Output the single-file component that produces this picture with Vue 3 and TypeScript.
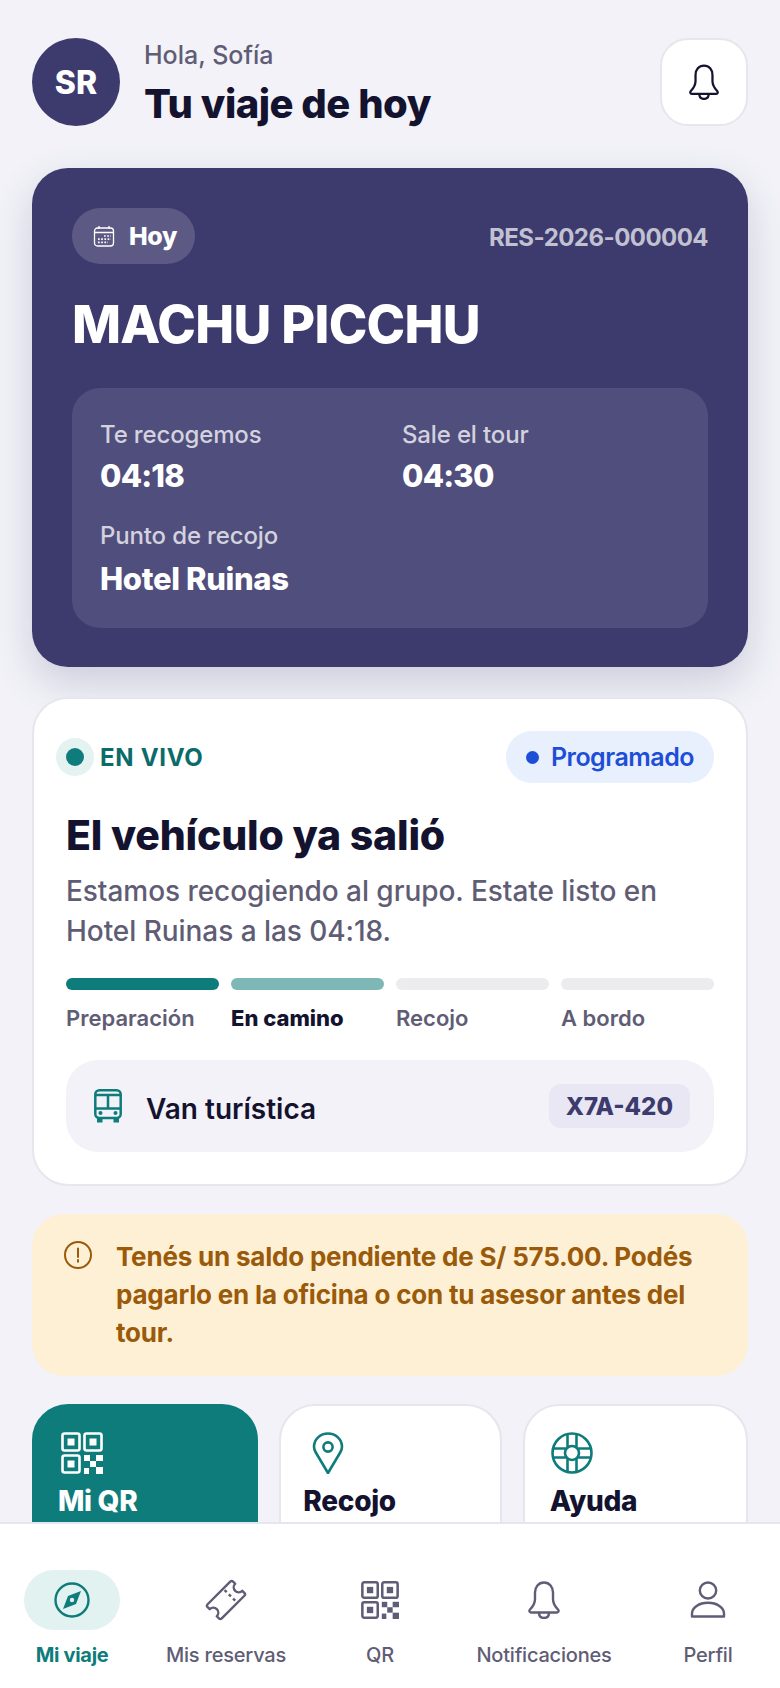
<script setup lang="ts">
interface Step {
  label: string;
  state: "done" | "current" | "next";
}

interface NavItem {
  label: string;
  icon: string;
  active?: boolean;
}

const steps: Step[] = [
  { label: "Preparación", state: "done" },
  { label: "En camino", state: "current" },
  { label: "Recojo", state: "next" },
  { label: "A bordo", state: "next" },
];

const navItems: NavItem[] = [
  { label: "Mi viaje", icon: "compass", active: true },
  { label: "Mis reservas", icon: "ticket" },
  { label: "QR", icon: "qr" },
  { label: "Notificaciones", icon: "bell" },
  { label: "Perfil", icon: "user" },
];
</script>

<template>
  <div class="page">
    <header class="top">
      <div class="avatar">SR</div>
      <div class="greet">
        <p class="hello">Hola, Sofía</p>
        <h1 class="headline">Tu viaje de hoy</h1>
      </div>
      <button class="bell-btn" aria-label="Notificaciones">
        <svg class="bell-large" viewBox="0 0 34 38" fill="none" stroke="#14132f" stroke-width="2.400" stroke-linejoin="round">
          <path d="M17 1.500C11.500 1.500 8 6 8 11.500V18c0 4.500-2 7.500-5 10.500-1.200 1.300-.6 3 1 3h26c1.600 0 2.200-1.700 1-3-3-3-5-6-5-10.500v-6.500C26 6 22.500 1.500 17 1.500z" />
          <path d="M12 31.500c0 3.400 2 5.500 5 5.500s5-2.100 5-5.500" />
        </svg>
      </button>
    </header>

    <section class="hero">
      <div class="hero-top">
        <span class="chip">
          <svg class="icon-24" viewBox="0 0 24 24" fill="none" stroke="#fff" stroke-width="1.300">
            <rect x="2.500" y="4" width="19" height="18" rx="3" />
            <path d="M2.500 8.500h19M7 2v3M17 2v3" />
            <g stroke-width="1.700" stroke-dasharray="1.700 1.500">
              <path d="M12 12h7M6 15.200h13M6 18.400h10" />
            </g>
          </svg>
          Hoy
        </span>
        <span class="code">RES-2026-000004</span>
      </div>
      <h2 class="place">MACHU PICCHU</h2>
      <div class="times">
        <div class="time-grid">
          <div>
            <p class="time-label">Te recogemos</p>
            <p class="time-value">04:18</p>
          </div>
          <div>
            <p class="time-label">Sale el tour</p>
            <p class="time-value">04:30</p>
          </div>
        </div>
        <p class="time-label point-label">Punto de recojo</p>
        <p class="point-value">Hotel Ruinas</p>
      </div>
    </section>

    <section class="live">
      <div class="live-top">
        <span class="live-tag"><i class="live-dot"></i>EN VIVO</span>
        <span class="status"><i class="status-dot"></i>Programado</span>
      </div>
      <h3 class="live-title">El vehículo ya salió</h3>
      <p class="live-desc">Estamos recogiendo al grupo. Estate listo en Hotel Ruinas a las 04:18.</p>
      <div class="steps">
        <div v-for="step in steps" :key="step.label" class="step" :class="step.state">
          <div class="bar"></div>
          <span class="step-label">{{ step.label }}</span>
        </div>
      </div>
      <div class="vehicle">
        <svg class="bus" viewBox="0 0 28 34" fill="none" stroke="#0e7c7b" stroke-width="2.500" stroke-linejoin="round">
          <rect x="1.300" y="1.300" width="25.400" height="27.700" rx="4" />
          <path d="M1.300 6h25.400M14 6v13.500M1.300 19.500h25.400" />
          <circle cx="6.500" cy="24" r="2" fill="#0e7c7b" stroke="none" />
          <circle cx="21.500" cy="24" r="2" fill="#0e7c7b" stroke="none" />
          <path d="M3 28h5.500v5.500H3zM19.500 28H25v5.500h-5.500z" fill="#0e7c7b" stroke="none" />
        </svg>
        <span class="vehicle-name">Van turística</span>
        <span class="plate">X7A-420</span>
      </div>
    </section>

    <section class="alert">
      <svg class="alert-icon" viewBox="0 0 28 28" fill="none" stroke="#9a5a0a" stroke-width="2">
        <circle cx="14" cy="14" r="13" />
        <path d="M14 7.500v8.500M14 19v1.800" stroke-linecap="round" />
      </svg>
      <p class="alert-text">Tenés un saldo pendiente de S/ 575.00. Podés pagarlo en la oficina o con tu asesor antes del tour.</p>
    </section>

    <section class="quick">
      <a class="quick-card primary">
        <svg class="icon-42" viewBox="0 0 42 42" fill="none" stroke="#fff" stroke-width="2.600">
          <rect x="1.500" y="1.500" width="17" height="17" rx="2" />
          <rect x="23.500" y="1.500" width="17" height="17" rx="2" />
          <rect x="1.500" y="23.500" width="17" height="17" rx="2" />
          <g fill="#fff" stroke="none">
            <rect x="6.500" y="6.500" width="7" height="7" />
            <rect x="28.500" y="6.500" width="7" height="7" />
            <rect x="6.500" y="28.500" width="7" height="7" />
            <rect x="23" y="23" width="6" height="6" />
            <rect x="35" y="23" width="7" height="6" />
            <rect x="29" y="29" width="6" height="6" />
            <rect x="23" y="36" width="5" height="6" />
            <rect x="35" y="35" width="7" height="7" />
          </g>
        </svg>
        <span>Mi QR</span>
      </a>
      <a class="quick-card">
        <svg class="icon-42" viewBox="0 0 42 42" fill="none" stroke="#0e7c7b" stroke-width="2.600" stroke-linejoin="round">
          <path d="M21 41 8.800 20.500C7.800 18.800 7 16.800 7 14.800 7 7.300 13.300 1.500 21 1.500s14 5.800 14 13.300c0 2-.8 4-1.800 5.700z" />
          <circle cx="21" cy="15" r="4.600" />
        </svg>
        <span>Recojo</span>
      </a>
      <a class="quick-card">
        <svg class="icon-42" viewBox="0 0 42 42" fill="none" stroke="#0e7c7b" stroke-width="2.600">
          <circle cx="21" cy="21" r="19.500" />
          <circle cx="21" cy="21" r="7" />
          <path d="M16.500 2v13M25.500 2v13M16.500 27v13M25.500 27v13M2 16.500h13M2 25.500h13M27 16.500h13M27 25.500h13" />
        </svg>
        <span>Ayuda</span>
      </a>
    </section>

    <nav class="nav">
      <a v-for="item in navItems" :key="item.label" class="nav-item" :class="{ active: item.active }">
        <span class="nav-icon">
          <svg v-if="item.icon === 'compass'" class="icon-36" viewBox="0 0 36 36" fill="none" stroke="#0e7c7b" stroke-width="2.400">
            <circle cx="18" cy="18" r="16.500" />
            <path d="M27 9 22 22 9 27 14 14z" fill="#0e7c7b" stroke="none" />
            <circle cx="18" cy="18" r="2.200" fill="#e2f2f0" stroke="none" />
          </svg>
          <svg v-else-if="item.icon === 'ticket'" class="icon-42" viewBox="0 0 42 42" fill="none" stroke="#5f5d75" stroke-width="2.400" stroke-linejoin="round">
            <g transform="rotate(-45 21 21)">
              <path d="M5 11h32a2 2 0 0 1 2 2v3a5 5 0 0 0 0 10v3a2 2 0 0 1-2 2H5a2 2 0 0 1-2-2v-3a5 5 0 0 0 0-10v-3a2 2 0 0 1 2-2z" />
              <path d="M27 13v16" stroke-dasharray="3 3" />
            </g>
          </svg>
          <svg v-else-if="item.icon === 'qr'" class="icon-38" viewBox="0 0 42 42" fill="none" stroke="#5f5d75" stroke-width="2.800">
            <rect x="1.500" y="1.500" width="17" height="17" rx="2" />
            <rect x="23.500" y="1.500" width="17" height="17" rx="2" />
            <rect x="1.500" y="23.500" width="17" height="17" rx="2" />
            <g fill="#5f5d75" stroke="none">
              <rect x="6.500" y="6.500" width="7" height="7" />
              <rect x="28.500" y="6.500" width="7" height="7" />
              <rect x="6.500" y="28.500" width="7" height="7" />
              <rect x="23" y="23" width="6" height="6" />
              <rect x="35" y="23" width="7" height="6" />
              <rect x="29" y="29" width="6" height="6" />
              <rect x="23" y="36" width="5" height="6" />
              <rect x="35" y="35" width="7" height="7" />
            </g>
          </svg>
          <svg v-else-if="item.icon === 'bell'" class="bell-nav" viewBox="0 0 34 38" fill="none" stroke="#5f5d75" stroke-width="2.400" stroke-linejoin="round">
            <path d="M17 1.500C11.500 1.500 8 6 8 11.500V18c0 4.500-2 7.500-5 10.500-1.200 1.300-.6 3 1 3h26c1.600 0 2.200-1.700 1-3-3-3-5-6-5-10.500v-6.500C26 6 22.500 1.500 17 1.500z" />
            <path d="M12 31.500c0 3.400 2 5.500 5 5.500s5-2.100 5-5.500" />
          </svg>
          <svg v-else class="icon-38" viewBox="0 0 38 38" fill="none" stroke="#5f5d75" stroke-width="2.400" stroke-linejoin="round">
            <ellipse cx="19" cy="9.500" rx="8.200" ry="8" />
            <path d="M3 35.500v-3C3 26.500 10 21.800 19 21.800s16 4.700 16 10.700v3z" />
          </svg>
        </span>
        <span class="nav-label">{{ item.label }}</span>
      </a>
    </nav>
  </div>
</template>

<style>
html,
body {
  margin: 0;
  background: #f2f2f8;
}
</style>

<style scoped>
.page {
  height: 1688px;
  box-sizing: border-box;
  overflow: hidden;
  padding: 38px 32px 0;
  background: #f2f2f8;
  font-family: Inter, "Noto Sans", sans-serif;
  color: #14132f;
}

p,
h1,
h2,
h3 {
  margin: 0;
}

.top {
  height: 88px;
  display: flex;
  align-items: center;
  gap: 24px;
}

.avatar {
  width: 88px;
  height: 88px;
  flex: none;
  border-radius: 50%;
  background: #3d3a6e;
  color: #fff;
  display: flex;
  align-items: center;
  justify-content: center;
  font-size: 32px;
  font-weight: 800;
}

.greet {
  flex: 1;
  align-self: flex-start;
  padding-top: 1px;
}

.hello {
  font-size: 25px;
  line-height: 32px;
  color: #5f5d75;
  font-weight: 500;
}

.headline {
  margin-top: 8px;
  font-size: 40px;
  line-height: 50px;
  font-weight: 800;
  letter-spacing: -0.5px;
}

.bell-btn {
  width: 88px;
  height: 88px;
  flex: none;
  box-sizing: border-box;
  border: 2px solid #e6e6ec;
  border-radius: 28px;
  background: #fff;
  padding: 0;
  display: flex;
  align-items: center;
  justify-content: center;
}

.bell-large {
  width: 32px;
  height: 36px;
}

.bell-nav {
  width: 34px;
  height: 38px;
}

.icon-24 {
  width: 24px;
  height: 24px;
  flex: none;
}

.icon-36 {
  width: 36px;
  height: 36px;
}

.icon-38 {
  width: 38px;
  height: 38px;
}

.icon-42 {
  width: 42px;
  height: 42px;
  display: block;
}

.hero {
  margin-top: 42px;
  padding: 40px;
  height: 499px;
  box-sizing: border-box;
  border-radius: 36px;
  background: #3d3a6e;
  color: #fff;
  box-shadow: 0 16px 40px rgba(61, 58, 110, 0.2);
}

.hero-top {
  display: flex;
  align-items: center;
  justify-content: space-between;
}

.chip {
  display: inline-flex;
  align-items: center;
  gap: 13px;
  height: 56px;
  padding: 0 18px 0 20px;
  border-radius: 28px;
  background: rgba(255, 255, 255, 0.16);
  font-size: 25px;
  font-weight: 800;
  letter-spacing: -0.4px;
}

.code {
  padding-top: 2px;
  font-size: 24px;
  font-weight: 700;
  letter-spacing: -0.55px;
  color: rgba(255, 255, 255, 0.7);
}

.place {
  margin-top: 30px;
  font-size: 52px;
  line-height: 62px;
  font-weight: 800;
  letter-spacing: -0.7px;
}

.times {
  margin-top: 32px;
  padding: 31px 28px 28px;
  height: 240px;
  box-sizing: border-box;
  border-radius: 28px;
  background: rgba(255, 255, 255, 0.1);
}

.time-grid {
  display: grid;
  grid-template-columns: 1fr 1fr;
  gap: 24px;
}

.time-label {
  font-size: 24px;
  line-height: 32px;
  font-weight: 500;
  letter-spacing: -0.15px;
  color: rgba(255, 255, 255, 0.75);
}

.time-value {
  margin-top: 4px;
  font-size: 31px;
  line-height: 42px;
  font-weight: 800;
  letter-spacing: -0.8px;
}

.point-label {
  margin-top: 23px;
}

.point-value {
  margin-top: 7px;
  font-size: 31px;
  line-height: 40px;
  font-weight: 800;
  letter-spacing: -0.35px;
}

.live {
  margin-top: 30px;
  padding: 32px;
  border: 2px solid #e6e6ec;
  border-radius: 36px;
  background: #fff;
}

.live-top {
  display: flex;
  align-items: center;
  justify-content: space-between;
  height: 52px;
}

.live-tag {
  display: inline-flex;
  align-items: center;
  gap: 16px;
  font-size: 24px;
  font-weight: 700;
  letter-spacing: 0.7px;
  color: #0b6b6a;
}

.live-dot {
  width: 18px;
  height: 18px;
  border-radius: 50%;
  background: #0e7c7b;
  box-shadow: 0 0 0 10px #e4f3f1;
}

.status {
  display: inline-flex;
  align-items: center;
  gap: 12px;
  height: 52px;
  padding: 0 20px;
  border-radius: 26px;
  background: #e8effd;
  font-size: 25px;
  font-weight: 600;
  letter-spacing: -0.5px;
  color: #1d4ed8;
}

.status-dot {
  width: 13px;
  height: 13px;
  border-radius: 50%;
  background: #1d4ed8;
}

.live-title {
  margin-top: 26px;
  font-size: 41px;
  line-height: 52px;
  font-weight: 800;
  letter-spacing: -0.2px;
}

.live-desc {
  margin-top: 10px;
  font-size: 28px;
  line-height: 40px;
  font-weight: 500;
  letter-spacing: -0.05px;
  color: #5f5d75;
}

.steps {
  margin-top: 27px;
  display: grid;
  grid-template-columns: repeat(4, 1fr);
  gap: 12px;
}

.bar {
  height: 12px;
  border-radius: 6px;
  background: #ececef;
}

.done .bar {
  background: #0e7c7b;
}

.current .bar {
  background: #7db8b7;
}

.step-label {
  display: block;
  margin-top: 13px;
  font-size: 22px;
  line-height: 30px;
  font-weight: 600;
  color: #5f5d75;
  white-space: nowrap;
}

.current .step-label {
  font-weight: 800;
  color: #14132f;
}

.vehicle {
  margin-top: 27px;
  height: 92px;
  padding: 0 24px 0 28px;
  display: flex;
  align-items: center;
  gap: 24px;
  border-radius: 32px;
  background: #f2f2f8;
}

.bus {
  width: 28px;
  height: 34px;
  flex: none;
}

.vehicle-name {
  flex: 1;
  padding-top: 5px;
  font-size: 28px;
  font-weight: 600;
}

.plate {
  height: 44px;
  padding: 0 17px;
  display: flex;
  align-items: center;
  border-radius: 12px;
  background: #e8e7f3;
  font-size: 24px;
  font-weight: 800;
  color: #3d3a6e;
}

.alert {
  margin-top: 28px;
  padding: 24px 32px;
  display: flex;
  gap: 24px;
  border-radius: 32px;
  background: #fdf0d5;
}

.alert-icon {
  width: 28px;
  height: 28px;
  flex: none;
  margin-top: 3px;
}

.alert-text {
  font-size: 26px;
  line-height: 38px;
  font-weight: 700;
  letter-spacing: -0.2px;
  color: #9a5a0a;
}

.quick {
  margin-top: 28px;
  display: grid;
  grid-template-columns: 226fr 222fr 225fr;
  gap: 21px;
}

.quick-card {
  height: 190px;
  box-sizing: border-box;
  padding: 26px 22px;
  border: 2px solid #e6e6ec;
  border-radius: 36px;
  background: #fff;
  font-size: 28px;
  line-height: 36px;
  font-weight: 800;
  letter-spacing: -0.3px;
}

.quick-card span {
  display: block;
  margin-top: 9px;
}

.quick-card.primary {
  padding-left: 24px;
  border-color: #0e7c7b;
  background: #0e7c7b;
  color: #fff;
}

.quick-card .icon-42 {
  margin-left: 3px;
}

.quick-card:nth-child(2) .icon-42 {
  margin-left: 4px;
}

.quick-card:nth-child(3) {
  padding-left: 25px;
}

.quick-card:nth-child(3) .icon-42 {
  margin-left: 1px;
}

.nav {
  position: fixed;
  left: 0;
  right: 0;
  bottom: 0;
  height: 166px;
  box-sizing: border-box;
  padding: 46px 24px 0;
  display: grid;
  grid-template-columns: 96px 116px 96px 136px 96px;
  column-gap: 48px;
  border-top: 2px solid #e6e6ec;
  background: #fff;
}

.nav-item {
  display: flex;
  flex-direction: column;
  align-items: center;
}

.nav-icon {
  width: 96px;
  height: 60px;
  flex: none;
  border-radius: 30px;
  display: flex;
  align-items: center;
  justify-content: center;
}

.active .nav-icon {
  background: #e2f2f0;
}

.nav-label {
  margin-top: 11px;
  font-size: 20px;
  line-height: 28px;
  font-weight: 500;
  letter-spacing: -0.2px;
  color: #5f5d75;
  white-space: nowrap;
}

.active .nav-label {
  font-weight: 700;
  letter-spacing: -0.3px;
  color: #0e7c7b;
}
</style>
